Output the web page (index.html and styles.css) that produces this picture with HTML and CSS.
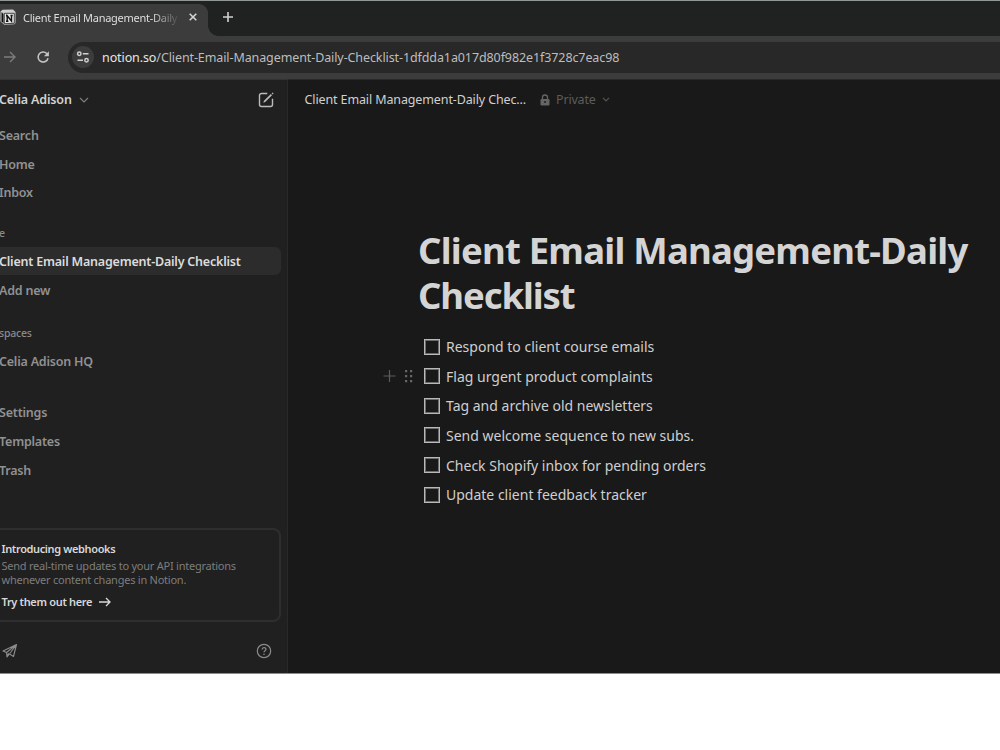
FILE: index.html
```html
<!DOCTYPE html>
<html lang="en">
<head>
<meta charset="utf-8">
<title>Client Email Management-Daily Checklist</title>
<link rel="stylesheet" href="styles.css">
</head>
<body>
<div class="window">
  <header class="tabstrip">
    <div class="tab">
      <svg class="favicon" width="16" height="16" viewBox="0 0 16 16"><path d="M.5 2.500 2.500.7 13 .5 15.500 3v11l-1.200 1.300-10 .5L.5 12.500z" fill="#d0d0d0"/><path d="M1.500 3v9.300l2 2.200V5z" fill="#111"/><path d="M4.300 4.300h10v10l-10 .4z" fill="#e4e4e4" stroke="#222" stroke-width=".8"/><path d="M7.200 12.300V6.800l4.300 5.200V6.500M6 6.700h1.800M6 12.300h2.400M10.500 6.500h2.200" fill="none" stroke="#111" stroke-width="1.400"/></svg>
      <span class="tab-title">Client Email Management-Daily</span>
      <svg class="tab-close" width="10" height="10" viewBox="0 0 10 10"><path d="M1.700 1.700l6.600 6.600M8.300 1.700l-6.600 6.600" stroke="#d4d4d4" stroke-width="1.600"/></svg>
    </div>
    <svg class="tab-add" width="12" height="12" viewBox="0 0 12 12"><path d="M6 1v10M1 6h10" stroke="#d0d0d0" stroke-width="1.600"/></svg>
  </header>
  <nav class="toolbar">
    <svg class="forward" width="12" height="12" viewBox="0 0 12 12"><path d="M0 6h11M6 1l5 5-5 5" fill="none" stroke="#7c7c7c" stroke-width="1.400"/></svg>
    <svg class="reload" width="14" height="14" viewBox="0 0 14 14"><path d="M12 8.200A5 5 0 1 1 10.700 3.500L12 4.800" fill="none" stroke="#c4c4c4" stroke-width="1.600"/><path d="M12.900 1.200v5H7.900z" fill="#c4c4c4"/></svg>
    <div class="address">
      <span class="site-info"><svg width="14" height="12" viewBox="0 0 14 12"><g fill="none" stroke="#cfcfcf" stroke-width="1.500"><circle cx="3.300" cy="2.800" r="1.700"/><path d="M6.800 2.800H12.500M1.500 9.200H7"/><circle cx="10.500" cy="9.200" r="1.700"/></g></svg></span>
      <span class="url"><b>notion.so</b>/Client-Email-Management-Daily-Checklist-1dfdda1a017d80f982e1f3728c7eac98</span>
    </div>
  </nav>
  <div class="app">
    <aside class="sidebar">
      <div class="workspace">
        <span class="workspace-name">Celia Adison</span>
        <svg class="chevron" width="10" height="6" viewBox="0 0 10 6"><path d="M1 1l4 4 4-4" fill="none" stroke="#7d7d7d" stroke-width="1.200"/></svg>
        <svg class="compose" width="16" height="16" viewBox="0 0 16 16"><path d="M9.300 1.500H3.500a2 2 0 0 0-2 2v9a2 2 0 0 0 2 2h9a2 2 0 0 0 2-2V6.700" fill="none" stroke="#bbb" stroke-width="1.400"/><path d="M5.300 10.700l.7-1.900L12.800 2l1.200 1.200-6.800 6.800z" fill="#bbb"/><path d="M14 .800l1.200 1.200" stroke="#bbb" stroke-width="1.200"/></svg>
      </div>
      <ul class="menu">
        <li><span>Search</span></li>
        <li><span>Home</span></li>
        <li><span>Inbox</span></li>
      </ul>
      <h2 class="section section-private">e</h2>
      <ul class="menu">
        <li class="active"><span>Client Email Management-Daily Checklist</span></li>
        <li><span>Add new</span></li>
      </ul>
      <h2 class="section section-spaces">spaces</h2>
      <ul class="menu">
        <li><span>Celia Adison HQ</span></li>
      </ul>
      <ul class="menu menu-tools">
        <li><span>Settings</span></li>
        <li><span>Templates</span></li>
        <li><span>Trash</span></li>
      </ul>
      <section class="promo">
        <h3>Introducing webhooks</h3>
        <p>Send real-time updates to your API integrations<br>whenever content changes in Notion.</p>
        <a class="promo-link"><span>Try them out here</span><svg width="12" height="10" viewBox="0 0 12 10"><path d="M0 5h11M7 1l4 4-4 4" fill="none" stroke="#d8d8d8" stroke-width="1.300"/></svg></a>
      </section>
      <footer class="side-footer">
        <svg width="16" height="16" viewBox="0 0 16 16"><path d="M1 8 14.500 1.500 11.500 13.500 7.500 11 5 14 4.500 9.500zM4.500 9.500 14.500 1.500 7.500 11M5 14l1.500-4" fill="none" stroke="#8b8b8b" stroke-width="1.100" stroke-linejoin="round"/></svg>
        <svg width="16" height="16" viewBox="0 0 16 16"><circle cx="8" cy="8" r="6.700" fill="none" stroke="#8b8b8b" stroke-width="1.200"/><path d="M6.100 6.500c0-2.500 3.900-2.500 3.900-.2C10 7.700 8 7.700 8 9.300" fill="none" stroke="#8b8b8b" stroke-width="1.200"/><circle cx="8" cy="11.300" r=".8" fill="#8b8b8b"/></svg>
      </footer>
    </aside>
    <main class="page">
      <div class="topbar">
        <span class="crumb">Client Email Management-Daily Chec...</span>
        <svg class="lock" width="10" height="12" viewBox="0 0 10 12"><path d="M2.500 5V3.500a2.500 2.500 0 0 1 5 0V5" fill="none" stroke="#656565" stroke-width="1.300"/><rect x=".5" y="5" width="9" height="6.500" rx="1.200" fill="#656565"/><circle cx="5" cy="8" r=".9" fill="#191919"/></svg>
        <span class="private">Private</span>
        <svg width="8" height="5" viewBox="0 0 8 5"><path d="M1 .800l3 3 3-3" fill="none" stroke="#555" stroke-width="1.200"/></svg>
      </div>
      <h1 class="title">Client Email Management-Daily<br><span class="title-end">Checklist</span></h1>
      <ul class="todos">
        <li><i class="box"></i><span>Respond to client course emails</span></li>
        <li><svg class="handles" width="31" height="14" viewBox="0 0 31 14"><path d="M6.500 1v12M.5 7h12" stroke="#5c5c5c" stroke-width="1.200"/><g fill="#666"><path d="M22 1h2.200v2.200H22zM27 1h2.200v2.200H27zM22 6h2.200v2.200H22zM27 6h2.200v2.200H27zM22 11h2.200v2.200H22zM27 11h2.200v2.200H27z"/></g></svg><i class="box"></i><span>Flag urgent product complaints</span></li>
        <li><i class="box"></i><span>Tag and archive old newsletters</span></li>
        <li><i class="box"></i><span>Send welcome sequence to new subs.</span></li>
        <li><i class="box"></i><span>Check Shopify inbox for pending orders</span></li>
        <li><i class="box"></i><span>Update client feedback tracker</span></li>
      </ul>
    </main>
  </div>
</div>
</body>
</html>
```
FILE: styles.css
```css
* { box-sizing: border-box; }
body { margin: 0; background: #fff; font-family: "Noto Sans", sans-serif; }
h1, h2, h3, p, ul { margin: 0; padding: 0; font-weight: inherit; white-space: nowrap; }
ul { list-style: none; }
svg { display: block; flex: none; }
span { white-space: nowrap; }
.window { height: 674px; display: flex; flex-direction: column; overflow: hidden; border-top: 1px solid #929896; border-bottom: 1px solid #8c8c8c; background: #191919; }
.tabstrip { height: 35px; display: flex; align-items: center; background: #1f2221; flex: none; }
.tab { width: 208px; height: 32px; margin-top: 3px; display: flex; align-items: center; background: #3c3c3c; border-top-right-radius: 9px; position: relative; padding-bottom: 6px; }
.tab::after { content: ""; position: absolute; left: 100%; bottom: 0; width: 10px; height: 10px; background: radial-gradient(circle at 100% 0, #1f2221 9.500px, #3c3c3c 10px); }
.favicon { margin-right: 7px; }
.tab-title { width: 157px; color: #dedede; font-size: 11px; letter-spacing: -0.270px; mask-image: linear-gradient(to right, #000 128px, transparent 158px); }
.tab-close { margin-left: 8px; }
.tab-add { margin-left: 14px; margin-bottom: 3px; }
.toolbar { height: 43px; display: flex; align-items: center; background: #3c3c3c; padding-bottom: 1px; flex: none; }
.forward { margin-left: 4px; }
.reload { margin-left: 20px; }
.address { margin-left: 18px; flex: 1; height: 31px; border-radius: 16px 0 0 16px; background: #282828; display: flex; align-items: center; padding-left: 4px; }
.site-info { width: 22px; height: 22px; border-radius: 50%; background: #3c3c3c; display: flex; align-items: center; justify-content: center; }
.url { margin-left: 8px; font-size: 12.500px; letter-spacing: -0.098px; color: #bdbdbd; }
.url b { color: #e6e6e6; font-weight: 400; }
.app { flex: 1; display: flex; min-height: 0; }
.sidebar { width: 288px; flex: none; background: #202020; border-right: 1px solid #292929; border-top: 1px solid #333; display: flex; flex-direction: column; }
.workspace { height: 40px; display: flex; align-items: center; padding-bottom: 1px; }
.workspace-name { color: #d2d2d2; font-size: 12.500px; font-weight: 600; letter-spacing: -0.150px; text-indent: -1px; }
.chevron { margin-left: 7px; }
.compose { margin-left: auto; margin-right: 13px; }
.workspace + .menu { margin-top: 1px; }
.menu li { height: 28.800px; display: flex; align-items: center; font-size: 12.500px; font-weight: 600; letter-spacing: -0.210px; text-indent: -1px; color: #919191; }
.menu .active { color: #dcdcdc; background: #2c2c2c; border-radius: 0 6px 6px 0; margin-right: 6px; height: 28px; }
.menu .active + li { height: 30px; }
.section { font-size: 10.500px; font-weight: 500; letter-spacing: -0.200px; text-indent: -1px; color: #8a8a8a; line-height: 16px; }
.section-private { margin: 18px 0 6px; }
.section-spaces { margin: 20px 0 6px; }
.menu-tools { margin-top: 22.400px; }
.promo { margin: 42.600px 6px 0 0; height: 94px; border: 2px solid #2e2e2e; border-left: 0; border-radius: 0 8px 8px 0; padding: 11px 0 0 1.500px; line-height: 14px; }
.promo h3 { font-size: 11px; font-weight: 600; letter-spacing: -0.370px; color: #d8d8d8; line-height: 16px; }
.promo p { font-size: 11px; letter-spacing: -0.240px; color: #7d7d7d; margin-top: 2px; }
.promo-link { display: flex; align-items: center; gap: 7px; margin-top: 7px; font-size: 11px; font-weight: 600; letter-spacing: -0.330px; color: #d8d8d8; line-height: 16px; }
.side-footer { display: flex; justify-content: space-between; padding: 21px 15px 0 2px; }
.page { flex: 1; border-top: 1px solid #2a2a2a; min-width: 0; }
.topbar { height: 40px; padding: 0 0 1px 16.500px; display: flex; align-items: center; }
.crumb { color: #d0d0d0; font-size: 12.500px; letter-spacing: -0.120px; }
.lock { margin: 0 6px 0 14px; }
.private { color: #5c5c5c; font-size: 12.500px; letter-spacing: -0.200px; margin-right: 6px; }
.title { margin: 108px 0 0 130px; font-size: 36.500px; line-height: 45px; font-weight: 700; letter-spacing: -0.770px; color: #d4d4d4; }
.title-end { letter-spacing: -1.100px; }
.todos { margin: 13.700px 0 0 136px; }
.todos li { height: 29.650px; display: flex; align-items: center; position: relative; font-size: 14px; color: #cfcfcf; }
.box { width: 16px; height: 16px; border: 1px solid #b9b9b9; box-shadow: inset 0 0 0 1px #6c6c6c; margin-right: 6px; }
.handles { position: absolute; left: -41px; top: 8px; }
```
